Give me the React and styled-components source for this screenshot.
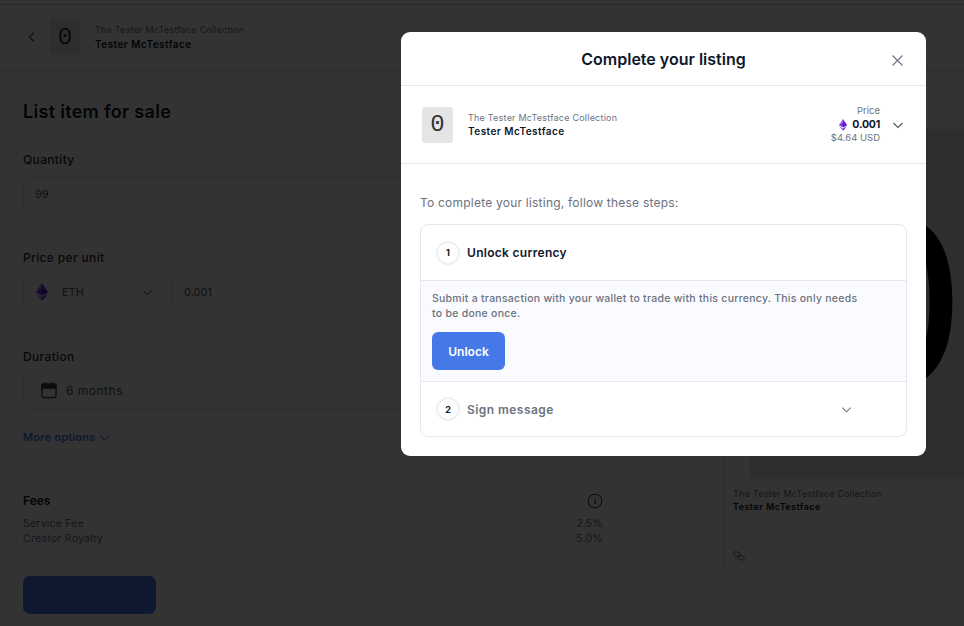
import React from 'react';
import styled, { createGlobalStyle } from 'styled-components';

const Global = createGlobalStyle`
  html, body { margin: 0; padding: 0; background: #fff; }
  body { font-family: Inter, "Liberation Sans", sans-serif; color: #0f172a; }
  * { box-sizing: border-box; }
`;

const Page = styled.div`
  position: relative; width: 964px; height: 626px; overflow: hidden; background: #fff;
  display: flex; flex-direction: column;
`;
const TopStrip = styled.div`height: 5px; flex: none; border-bottom: 1px solid #cfd2d6; background: #fff;`;
const Header = styled.header`
  height: 67px; flex: none; display: flex; align-items: center; padding: 0 0 2px 27px;
  border-bottom: 1px solid #e5e7eb;
`;
const BackIcon = styled.svg`width: 10px; height: 12px; margin-right: 13px; color: #4b5563;`;
const Thumb = styled.div`
  width: ${p => p.$w}px; height: 36px; flex: none; background: #e5e5e5; border-radius: 3px;
  display: flex; align-items: center; justify-content: center;
  font: 24px "Liberation Mono", monospace; color: #333;
`;
const ItemText = styled.div`display: flex; flex-direction: column; gap: ${p => p.$tight ? 2 : 3}px; margin-left: ${p => p.$gap}px;`;
const Collection = styled.div`font-size: 9px; line-height: 11px; letter-spacing: .22px; color: #6b7280; white-space: nowrap;`;
const ItemName = styled.div`font-size: ${p => p.$small ? 9 : 10}px; line-height: 12px; font-weight: 600; letter-spacing: .45px; color: #0f172a; white-space: nowrap;`;
const Body = styled.main`flex: 1; display: flex; min-height: 0; padding-left: 23px;`;
const Form = styled.section`width: 580px; flex: none; display: flex; flex-direction: column;`;
const Title = styled.h1`margin: 29px 0 0; font-size: 18px; line-height: 22px; font-weight: 600; letter-spacing: .3px; color: #0f172a;`;
const Label = styled.div`font-size: 12px; line-height: 16px; font-weight: 500; letter-spacing: .35px; color: #1f2937; margin-top: ${p => p.$top}px;`;
const Field = styled.div`
  display: flex; align-items: center; height: ${p => p.$h}px; margin-top: ${p => p.$top || 8}px;
  border: 1px solid #e5e7eb; border-radius: 7px; padding: 0 0 1px 11px;
  font-size: 11px; color: #4b5563; flex: ${p => p.$grow ? 1 : 'none'};
`;
const Row = styled.div`display: flex; gap: 6px; margin-top: 7px;`;
const SelectField = styled(Field)`width: 143px; margin-top: 0; padding: 0 12px 0 12px;`;
const InputField = styled(Field)`margin-top: 0;`;
const SelectText = styled.span`margin-left: 14px; flex: 1;`;
const DurationField = styled(Field)`padding-left: 16px; font-size: 12px; letter-spacing: .5px; gap: 8px;`;
const More = styled.div`
  display: flex; align-items: center; gap: 4px; margin-top: 20px;
  font-size: 11px; line-height: 16px; font-weight: 600; letter-spacing: .2px; color: #4679e8;
`;
const Divider = styled.hr`margin: 24px 0 0; border: 0; border-top: 1px solid #e5e7eb; width: 100%;`;
const FeesHead = styled.div`
  display: flex; justify-content: space-between; align-items: center; margin-top: 23px;
  font-size: 12px; line-height: 16px; font-weight: 600; color: #0f172a;
`;
const FeeRow = styled.div`
  display: flex; justify-content: space-between; margin-top: ${p => p.$top}px;
  font-size: 10.5px; line-height: 15px; letter-spacing: .22px; color: #6b7280;
`;
const CTA = styled.div`width: 133px; height: 38px; flex: none; margin-top: 30px; background: #4679e8; border-radius: 7px;`;

const Preview = styled.aside`
  flex: none; width: 360px; height: 445px; margin: 57px 0 0 120px;
  border: 1px solid #e5e7eb; border-radius: 7px; display: flex; flex-direction: column; padding-left: 25px;
`;
const PreviewImage = styled.div`
  height: 349px; width: 334px; flex: none; background: #e5e5e5; padding: 30px 0 0 66px;
  display: flex; align-items: center; justify-content: flex-start; overflow: hidden;
  font: 255px/1 "Liberation Mono", monospace; color: #000;
`;
const PreviewText = styled.div`display: flex; flex-direction: column; gap: 2px; margin: 9px 0 0 -16px;`;
const PreviewFooter = styled.div`
  margin: 28px 0 0 -25px; padding: 9px 0 0 9px; border-top: 1px solid #e5e7eb; color: #4b5563; display: flex;
`;

const Overlay = styled.div`position: absolute; inset: 0; background: rgba(0,0,0,.8);`;
const Modal = styled.div`
  position: absolute; left: 401px; top: 32px; width: 525px; height: 424px; background: #fff;
  border-radius: 9px; display: flex; flex-direction: column; overflow: hidden;
`;
const ModalHead = styled.div`
  position: relative; height: 54px; flex: none; display: flex; align-items: center; justify-content: center;
  border-bottom: 1px solid #e5e7eb;
  font-size: 16px; font-weight: 600; color: #0f172a;
`;
const CloseIcon = styled.svg`position: absolute; right: 22px; top: 22px; width: 13px; height: 13px; color: #6b7280;`;
const ItemRow = styled.div`
  height: 78px; flex: none; display: flex; align-items: center; padding: 0 22px 0 21px;
  border-bottom: 1px solid #e5e7eb;
`;
const PriceBlock = styled.div`margin-left: auto; padding-bottom: 2px; display: flex; flex-direction: column; align-items: flex-end;`;
const PriceSmall = styled.div`font-size: 9.5px; line-height: 11px; color: #6b7280; white-space: nowrap;`;
const PriceValue = styled.div`display: flex; align-items: center; gap: 5px; margin-top: 2px; font-size: 10.5px; line-height: 14px; font-weight: 700; letter-spacing: -.2px; color: #0f172a;`;
const Chevron = styled.svg`width: ${p => p.$s || 12}px; height: ${p => p.$s || 12}px; flex: none; color: ${p => p.$c || '#4b5563'}; margin-left: ${p => p.$ml || 0}px;`;
const ModalBody = styled.div`flex: 1; padding: 30px 19px 0;`;
const Intro = styled.div`font-size: 12px; line-height: 18px; letter-spacing: .22px; color: #6b7280;`;
const Steps = styled.div`margin-top: 12px; border: 1px solid #e5e7eb; border-radius: 8px; overflow: hidden;`;
const StepHead = styled.div`
  height: ${p => p.$h}px; display: flex; align-items: center; gap: 7px; padding: 0 54px 0 15px;
  border-bottom: ${p => p.$line ? '1px solid #e5e7eb' : 0};
`;
const StepNum = styled.div`
  width: 24px; height: 24px; flex: none; border: 2px solid #eef0f2; border-radius: 50%;
  display: flex; align-items: center; justify-content: center;
  font-size: 9px; font-weight: 700; color: #0f172a;
`;
const StepTitle = styled.div`font-size: 12px; font-weight: 600; letter-spacing: ${p => p.$muted ? '.45px' : '.3px'}; color: ${p => p.$muted ? '#6b7280' : '#0f172a'}; flex: 1;`;
const StepBody = styled.div`height: 101px; padding: 10px 11px 0; background: #fafbfe; border-bottom: 1px solid #e5e7eb;`;
const Desc = styled.p`margin: 0; max-width: 432px; font-size: 10.5px; line-height: 15px; font-weight: 500; letter-spacing: .26px; color: #6b7280;`;
const Unlock = styled.button`
  display: block; margin-top: 11px; width: 73px; height: 38px; border: 0; border-radius: 6px;
  background: #4679e8; color: #fff; font: 600 12px Inter, sans-serif;
`;

const Eth = ({ w = 12, h = 18 }) => (
  <svg width={w} height={h} viewBox="0 0 12 18" style={{ flex: 'none' }}>
    <path d="M6 0 0 9l6 3.4z" fill="#9a5cf0" />
    <path d="M6 0l6 9-6 3.4z" fill="#7026d8" />
    <path d="M6 6 0 9l6 3.4z" fill="#7c34e6" />
    <path d="M6 6l6 3-6 3.4z" fill="#5218b4" />
    <path d="M0 10.4 6 18v-4.2z" fill="#a772f4" />
    <path d="M12 10.4 6 18v-4.2z" fill="#7a30e0" />
  </svg>
);
const Down = (p) => (
  <Chevron viewBox="0 0 12 12" fill="none" stroke="currentColor" strokeWidth="1.1" {...p}>
    <path d="M1.5 4 6 8.5 10.5 4" />
  </Chevron>
);
const Calendar = () => (
  <svg width="18" height="18" viewBox="0 0 18 18" fill="none" stroke="#374151" strokeWidth="1.4" style={{ flex: 'none' }}>
    <rect x="2" y="3" width="14" height="13.5" rx="1.5" />
    <path d="M2 3.5h14V7H2z" fill="#374151" />
    <path d="M5.5 1v2M12.5 1v2" />
  </svg>
);
const Info = () => (
  <svg width="16" height="16" viewBox="0 0 16 16" fill="none" stroke="#374151" strokeWidth="1.1">
    <circle cx="8" cy="8" r="6.8" />
    <path d="M8 7.2v4M8 4.4v1.2" strokeWidth="1.4" />
  </svg>
);
const LinkIcon = () => (
  <svg width="12" height="10" viewBox="0 0 12 10" fill="none" stroke="#6b7280" strokeWidth=".9">
    <rect x="0.6" y="1" width="7" height="4.4" rx="2.2" transform="rotate(20 4 3)" />
    <rect x="4.4" y="4.4" width="7" height="4.4" rx="2.2" transform="rotate(20 8 6.5)" />
  </svg>
);

export default function App() {
  return (
    <Page>
      <Global />
      <TopStrip />
      <Header>
        <BackIcon viewBox="0 0 10 12" fill="none" stroke="currentColor" strokeWidth="1.3"><path d="M7 1.5 2.5 6 7 10.5" /></BackIcon>
        <Thumb $w={30}>0</Thumb>
        <ItemText $gap={15}>
          <Collection>The Tester McTestface Collection</Collection>
          <ItemName>Tester McTestface</ItemName>
        </ItemText>
      </Header>
      <Body>
        <Form>
          <Title>List item for sale</Title>
          <Label $top={29}>Quantity</Label>
          <Field $h={36}>99</Field>
          <Label $top={38}>Price per unit</Label>
          <Row>
            <SelectField $h={38}><Eth /><SelectText>ETH</SelectText><Down $c="#6b7280" $s={11} /></SelectField>
            <InputField $h={38} $grow>0.001</InputField>
          </Row>
          <Label $top={38}>Duration</Label>
          <DurationField $h={37} $top={7}><Calendar />6 months</DurationField>
          <More>More options <Down $c="#4679e8" $s={11} /></More>
          <Divider />
          <FeesHead>Fees<Info /></FeesHead>
          <FeeRow $top={7}><span>Service Fee</span><span>2.5%</span></FeeRow>
          <FeeRow $top={0}><span>Creator Royalty</span><span>5.0%</span></FeeRow>
          <CTA />
        </Form>
        <Preview>
          <PreviewImage>0</PreviewImage>
          <PreviewText>
            <Collection>The Tester McTestface Collection</Collection>
            <ItemName $small>Tester McTestface</ItemName>
          </PreviewText>
          <PreviewFooter><LinkIcon /></PreviewFooter>
        </Preview>
      </Body>
      <Overlay />
      <Modal>
        <ModalHead>
          Complete your listing
          <CloseIcon viewBox="0 0 13 13" fill="none" stroke="currentColor" strokeWidth="1.1"><path d="M1.5 1.5l10 10M11.5 1.5l-10 10" /></CloseIcon>
        </ModalHead>
        <ItemRow>
          <Thumb $w={31}>0</Thumb>
          <ItemText $gap={15} $tight>
            <Collection>The Tester McTestface Collection</Collection>
            <ItemName>Tester McTestface</ItemName>
          </ItemText>
          <PriceBlock>
            <PriceSmall>Price</PriceSmall>
            <PriceValue><Eth w={8} h={12} />0.001</PriceValue>
            <PriceSmall>$4.64 USD</PriceSmall>
          </PriceBlock>
          <Down $ml={12} $s={12} />
        </ItemRow>
        <ModalBody>
          <Intro>To complete your listing, follow these steps:</Intro>
          <Steps>
            <StepHead $h={56} $line>
              <StepNum>1</StepNum>
              <StepTitle>Unlock currency</StepTitle>
            </StepHead>
            <StepBody>
              <Desc>Submit a transaction with your wallet to trade with this currency. This only needs to be done once.</Desc>
              <Unlock>Unlock</Unlock>
            </StepBody>
            <StepHead $h={54}>
              <StepNum>2</StepNum>
              <StepTitle $muted>Sign message</StepTitle>
              <Down $c="#6b7280" $s={11} />
            </StepHead>
          </Steps>
        </ModalBody>
      </Modal>
    </Page>
  );
}
